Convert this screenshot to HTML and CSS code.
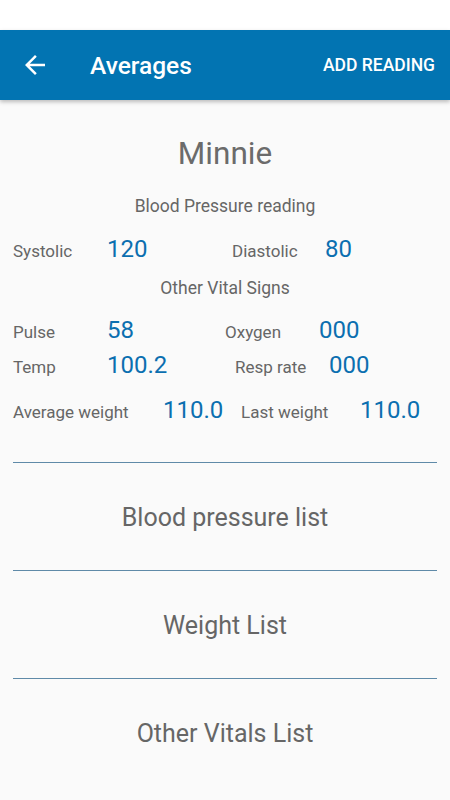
FILE: index.html
```html
<!doctype html>
<html lang="en">
<head>
  <meta charset="UTF-8">
  <meta name="viewport" content="width=device-width, initial-scale=1.0">
  <title>Averages</title>
  <link rel="stylesheet" href="styles.css">
</head>
<body>
<div class="status"></div>
<div class="bar">
  <svg class="back" width="30" height="30" viewBox="0 0 24 24">
    <path d="M20 11H7.83l5.59-5.59L12 4l-8 8 8 8 1.41-1.41L7.83 13H20v-2z" fill="#fff"/>
  </svg>
  <h1>Averages</h1>
  <span class="add">ADD READING</span>
</div>
<div class="main">
  <h2 class="name">Minnie</h2>
  <h3 class="sub">Blood Pressure reading</h3>
  <div class="row r1">
    <span class="lbl w94">Systolic</span>
    <span class="val w125">120</span>
    <span class="lbl w93">Diastolic</span>
    <span class="val">80</span>
  </div>
  <h3 class="sub sub2">Other Vital Signs</h3>
  <div class="row r2">
    <span class="lbl w94">Pulse</span>
    <span class="val w118">58</span>
    <span class="lbl w94">Oxygen</span>
    <span class="val">000</span>
  </div>
  <div class="row r3">
    <span class="lbl w94">Temp</span>
    <span class="val w128">100.2</span>
    <span class="lbl w94">Resp rate</span>
    <span class="val">000</span>
  </div>
  <div class="row r4">
    <span class="lbl w150">Average weight</span>
    <span class="val w78">110.0</span>
    <span class="lbl w119">Last weight</span>
    <span class="val">110.0</span>
  </div>
  <div class="lists">
    <div class="item">Blood pressure list</div>
    <div class="item">Weight List</div>
    <div class="item">Other Vitals List</div>
  </div>
</div>
</body>
</html>
```

FILE: styles.css
```css
* {
  margin: 0;
  padding: 0;
  box-sizing: border-box;
}

body {
  width: 450px;
  height: 800px;
  overflow: hidden;
  background: #fafafa;
  font-family: Roboto, "Liberation Sans", sans-serif;
  color: #666;
}

.status {
  height: 30px;
  background: #fff;
}

.bar {
  height: 70px;
  background: #0274b2;
  color: #fff;
  display: flex;
  align-items: center;
  padding: 0 15px 0 20px;
  box-shadow: 0 2px 4px rgba(0, 0, 0, 0.25);
  position: relative;
}

.bar .back {
  display: block;
}

.bar h1 {
  font-size: 24.5px;
  font-weight: 500;
  margin-left: 40px;
  flex: 1;
}

.bar .add {
  font-size: 17.5px;
  font-weight: 500;
}

.main {
  padding-top: 34px;
}

.name {
  font-size: 31.5px;
  font-weight: 400;
  line-height: 40px;
  text-align: center;
  color: #6b6b6b;
}

.sub {
  font-size: 17.5px;
  font-weight: 400;
  line-height: 20px;
  text-align: center;
  margin-top: 22px;
}

.sub2 {
  margin-top: 14px;
}

.row {
  display: flex;
  align-items: baseline;
  padding-left: 13px;
  line-height: 30px;
  height: 30px;
}

.r1 { margin-top: 18px; }
.r2 { margin-top: 17px; }
.r3 { margin-top: 5px; }
.r4 { margin-top: 15px; }

.lbl {
  font-size: 17px;
  line-height: 20px;
}

.val {
  font-size: 24px;
  color: #0b6fb0;
}

.w78 { width: 78px; }
.w93 { width: 93px; }
.w94 { width: 94px; }
.w118 { width: 118px; }
.w119 { width: 119px; }
.w125 { width: 125px; }
.w128 { width: 128px; }
.w150 { width: 150px; }

.lists {
  margin: 37px 13px 0;
}

.item {
  border-top: 1px solid #5f8aa8;
  padding: 40px 0 37px;
  font-size: 25px;
  line-height: 30px;
  text-align: center;
}
```
